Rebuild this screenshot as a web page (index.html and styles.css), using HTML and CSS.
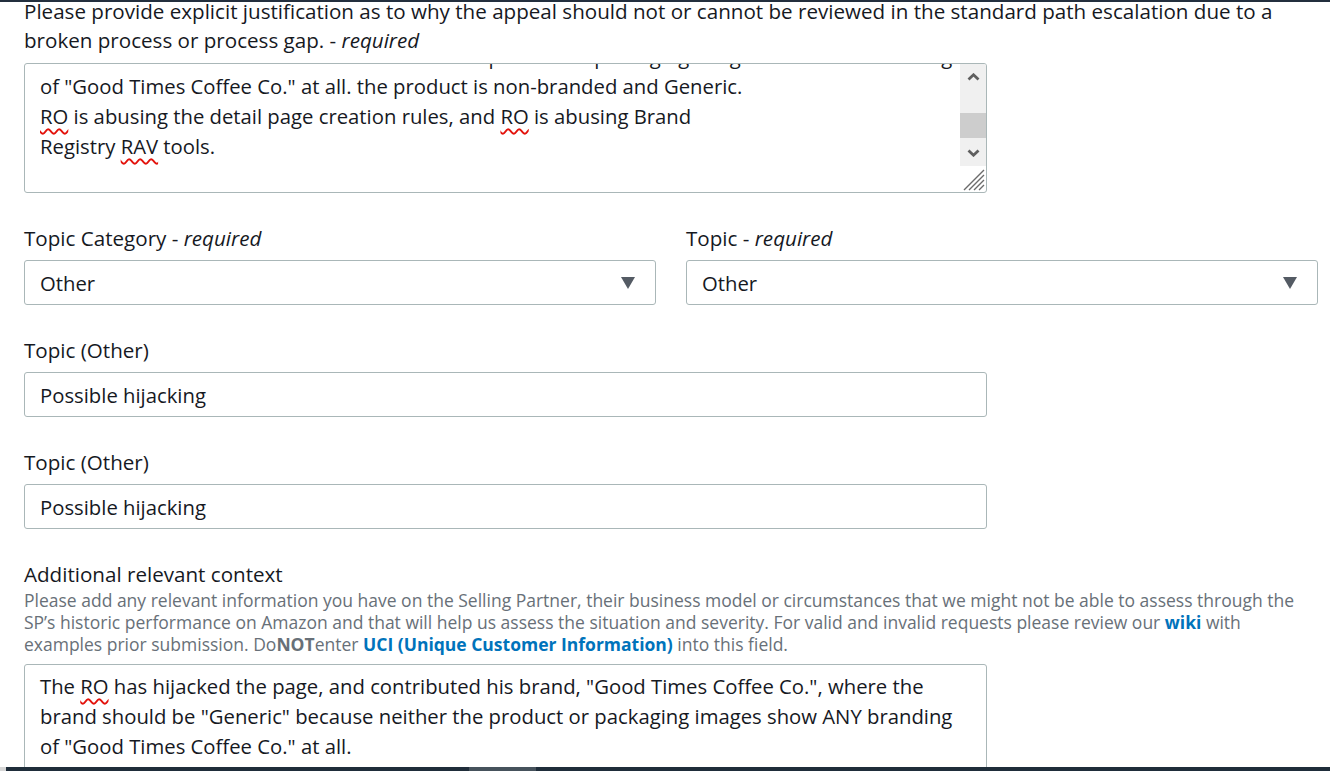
FILE: index.html
```html
<!DOCTYPE html>
<html lang="en">
<head>
    <meta charset="UTF-8">
    <meta name="viewport" content="width=device-width, initial-scale=1.0">
    <title>Appeal Escalation</title>
    <link rel="stylesheet" href="styles.css">
</head>
<body>
    <main class="appeal-form">
        <div class="field field-first">
            <label class="field-label field-label-long">Please provide explicit justification as to why the appeal should not or cannot be reviewed in the standard path escalation due to a broken process or process gap. - <em>required</em></label>
            <div class="textbox textbox-short">
                <div class="textbox-lines textbox-lines-scrolled">
                    <div class="line">brand should be "Generic" because neither the product or packaging images show ANY branding</div>
                    <div class="line">of "Good Times Coffee Co." at all. the product is non-branded and Generic.</div>
                    <div class="line"><span class="typo">RO</span> is abusing the detail page creation rules, and <span class="typo">RO</span> is abusing Brand</div>
                    <div class="line">Registry <span class="typo">RAV</span> tools.</div>
                </div>
                <div class="scrollbar">
                    <svg class="scroll-arrow" width="13" height="8" viewBox="0 0 13 8"><path d="M1.5 6.5 L6.5 1.8 L11.5 6.5" fill="none" stroke="#5f5f5f" stroke-width="2.8"/></svg>
                    <div class="scroll-thumb"></div>
                    <svg class="scroll-arrow" width="13" height="8" viewBox="0 0 13 8"><path d="M1.5 1.5 L6.5 6.2 L11.5 1.5" fill="none" stroke="#5f5f5f" stroke-width="2.8"/></svg>
                </div>
                <svg class="resize-grip" width="22" height="22" viewBox="0 0 22 22">
                    <path d="M1 21 L21 1 M6 21 L21 6 M11 21 L21 11 M16 21 L21 16" stroke="#6b6b6b" stroke-width="1.4"/>
                </svg>
            </div>
        </div>

        <div class="field-row">
            <div class="field">
                <label class="field-label">Topic Category - <em>required</em></label>
                <div class="select">
                    <span>Other</span>
                    <svg width="14" height="12" viewBox="0 0 14 12"><path d="M0 0 H14 L7 12 Z" fill="#545b64"/></svg>
                </div>
            </div>
            <div class="field">
                <label class="field-label">Topic - <em>required</em></label>
                <div class="select">
                    <span>Other</span>
                    <svg width="14" height="12" viewBox="0 0 14 12"><path d="M0 0 H14 L7 12 Z" fill="#545b64"/></svg>
                </div>
            </div>
        </div>

        <div class="field">
            <label class="field-label">Topic (Other)</label>
            <div class="input">Possible hijacking</div>
        </div>

        <div class="field">
            <label class="field-label">Topic (Other)</label>
            <div class="input">Possible hijacking</div>
        </div>

        <div class="field">
            <label class="field-label field-label-tight">Additional relevant context</label>
            <p class="field-help">Please add any relevant information you have on the Selling Partner, their business model or circumstances that we might not be able to assess through the SP’s historic performance on Amazon and that will help us assess the situation and severity. For valid and invalid requests please review our <a href="#">wiki</a> with examples prior submission. Do<b>NOT</b>enter <a href="#">UCI (Unique Customer Information)</a> into this field.</p>
            <div class="textbox textbox-tall">
                <div class="textbox-lines">
                    <div class="line">The <span class="typo">RO</span> has hijacked the page, and contributed his brand, "Good Times Coffee Co.", where the</div>
                    <div class="line">brand should be "Generic" because neither the product or packaging images show ANY branding</div>
                    <div class="line">of "Good Times Coffee Co." at all.</div>
                </div>
            </div>
        </div>
    </main>

    <div class="footer-bar">
        <span class="footer-edge"></span>
        <span class="footer-thumb"></span>
    </div>
</body>
</html>
```

FILE: styles.css
```css
* {
    margin: 0;
    padding: 0;
    box-sizing: border-box;
}

body {
    font-family: 'Open Sans', Lato, sans-serif;
    color: #16191f;
    background: white;
    border-top: 2px solid #232f3e;
    height: 100vh;
    overflow: hidden;
}

.appeal-form {
    padding: 0 12px 0 24px;
}

.field {
    margin-top: 33px;
}

.field-first {
    margin-top: -5px;
}

.field-label {
    display: block;
    font-size: 20.6px;
    line-height: 24px;
    margin-bottom: 10px;
}

.field-label-long {
    line-height: 29px;
    margin-bottom: 8px;
}

.field-label-tight {
    margin-bottom: 3px;
}

.field-row {
    display: grid;
    grid-template-columns: 1fr 1fr;
    gap: 30px;
    margin-top: 33px;
}

.field-row .field {
    margin-top: 0;
}

.select,
.input {
    height: 45px;
    border: 1px solid #aab7b8;
    border-radius: 3px;
    padding: 0 15px;
    display: flex;
    align-items: center;
    font-size: 20.3px;
}

.select {
    justify-content: space-between;
    padding-right: 20px;
}

.input {
    width: 963px;
}

.field-help {
    font-size: 17.5px;
    line-height: 22px;
    color: #687078;
    margin-bottom: 9px;
}

.field-help a {
    color: #0073bb;
    font-weight: bold;
    text-decoration: none;
}

.textbox {
    position: relative;
    width: 963px;
    border: 1px solid #aab7b8;
    border-radius: 3px;
    overflow: hidden;
    font-size: 20.3px;
    line-height: 30px;
}

.textbox-short {
    height: 130px;
}

.textbox-tall {
    height: 140px;
    padding-top: 6px;
}

.textbox-lines {
    padding: 0 40px 0 15px;
}

.textbox-lines-scrolled {
    margin-top: -23px;
}

.line {
    white-space: nowrap;
}

.typo {
    text-decoration: underline wavy #e3120b;
    text-decoration-thickness: 1.6px;
    text-underline-offset: 4px;
}

/* fake native scrollbar of the scrolled textarea */
.scrollbar {
    position: absolute;
    top: 0;
    right: 0;
    width: 26px;
    height: 102px;
    background: #f0f0f0;
    display: flex;
    flex-direction: column;
    align-items: center;
}

.scroll-arrow {
    margin-top: 9px;
}

.scroll-arrow:last-child {
    margin-top: 11px;
}

.scroll-thumb {
    width: 26px;
    height: 25px;
    margin-top: 32px;
    background: #cdcdcd;
}

.resize-grip {
    position: absolute;
    right: 1px;
    bottom: 1px;
}

.footer-bar {
    position: fixed;
    left: 0;
    right: 0;
    bottom: 0;
    height: 4px;
    background: #1f2d3a;
}

.footer-edge {
    position: absolute;
    left: 0;
    width: 6px;
    height: 100%;
    background: #d6d6d6;
}

.footer-thumb {
    position: absolute;
    left: 469px;
    width: 67px;
    height: 100%;
    background: #46525c;
}
```
